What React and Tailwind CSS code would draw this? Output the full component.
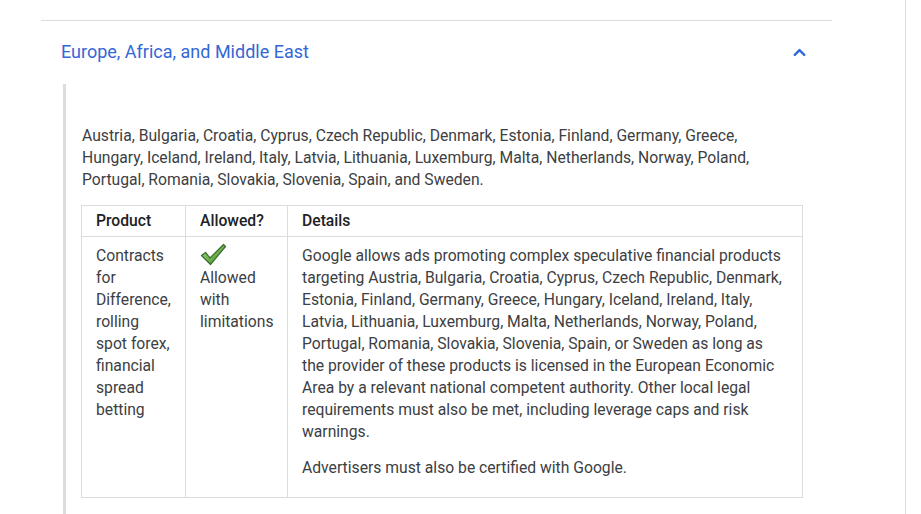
import { ChevronUp } from 'lucide-react';

const countries =
  'Austria, Bulgaria, Croatia, Cyprus, Czech Republic, Denmark, Estonia, Finland, Germany, Greece, Hungary, Iceland, Ireland, Italy, Latvia, Lithuania, Luxemburg, Malta, Netherlands, Norway, Poland, Portugal, Romania, Slovakia, Slovenia, Spain, and Sweden.';

function CheckMark() {
  return (
    <svg width="27" height="23" viewBox="0 0 27 23">
      <defs>
        <linearGradient id="chk" x1="0" y1="0" x2="1" y2="1">
          <stop offset="0" stopColor="#a6d98a" />
          <stop offset="0.5" stopColor="#6fb552" />
          <stop offset="1" stopColor="#3f8a2c" />
        </linearGradient>
      </defs>
      <path
        d="M1.5 12.5 L5.5 9.5 L10 15 L23.5 1.5 L25.5 3.5 L10.5 21.5 Z"
        fill="url(#chk)"
        stroke="#3d6b2e"
        strokeWidth="1.2"
        strokeLinejoin="round"
      />
    </svg>
  );
}

export default function App() {
  return (
    <div className="min-h-screen bg-white font-['Roboto',sans-serif]">
      <div className="w-[906px] min-h-[514px] border-r border-[#dadce0] pt-[20px]">
        {/* Section */}
        <div className="ml-[41px] w-[791px] border-t border-[#dadce0]">
          {/* Header */}
          <div className="flex items-center justify-between pl-[20px] pr-[23px] h-[63px]">
            <h2 className="text-[18px] leading-[24px] text-[#3367d6] pb-[1px]">
              Europe, Africa, and Middle East
            </h2>
            <ChevronUp className="w-[19px] h-[19px] text-[#3367d6]" strokeWidth={3} />
          </div>

          {/* Body */}
          <div className="ml-[22px] border-l-[3px] border-[#dadce0] pl-[16px] pr-[30px] pt-[41px] pb-[20px] text-[15.7px] leading-[22px] text-[#3c4043]">
            <p>{countries}</p>

            <table className="mt-[14px] -ml-[1px] w-[722px] border-collapse border border-[#dadce0] table-fixed">
              <colgroup>
                <col className="w-[104px]" />
                <col className="w-[102px]" />
                <col />
              </colgroup>
              <thead>
                <tr>
                  <th className="border border-[#dadce0] px-[14px] pt-[4px] pb-[4px] text-left font-medium text-[#202124]">
                    Product
                  </th>
                  <th className="border border-[#dadce0] px-[14px] pt-[4px] pb-[4px] text-left font-medium text-[#202124]">
                    Allowed?
                  </th>
                  <th className="border border-[#dadce0] px-[14px] pt-[4px] pb-[4px] text-left font-medium text-[#202124]">
                    Details
                  </th>
                </tr>
              </thead>
              <tbody>
                <tr>
                  <td className="border border-[#dadce0] px-[14px] pt-[8px] pb-[18px] align-top">
                    Contracts for Difference, rolling spot forex, financial spread betting
                  </td>
                  <td className="border border-[#dadce0] px-[14px] pt-[6px] pb-[18px] align-top">
                    <CheckMark />
                    <div className="mt-[1px]">Allowed with limitations</div>
                  </td>
                  <td className="border border-[#dadce0] px-[14px] pt-[8px] pb-[18px] align-top">
                    <p>
                      Google allows ads promoting complex speculative financial products targeting
                      Austria, Bulgaria, Croatia, Cyprus, Czech Republic, Denmark, Estonia, Finland,
                      Germany, Greece, Hungary, Iceland, Ireland, Italy, Latvia, Lithuania, Luxemburg,
                      Malta, Netherlands, Norway, Poland, Portugal, Romania, Slovakia, Slovenia, Spain,
                      or Sweden as long as the provider of these products is licensed in the European
                      Economic Area by a relevant national competent authority. Other local legal
                      requirements must also be met, including leverage caps and risk warnings.
                    </p>
                    <p className="mt-[14px]">Advertisers must also be certified with Google.</p>
                  </td>
                </tr>
              </tbody>
            </table>
          </div>
        </div>
      </div>
    </div>
  );
}
